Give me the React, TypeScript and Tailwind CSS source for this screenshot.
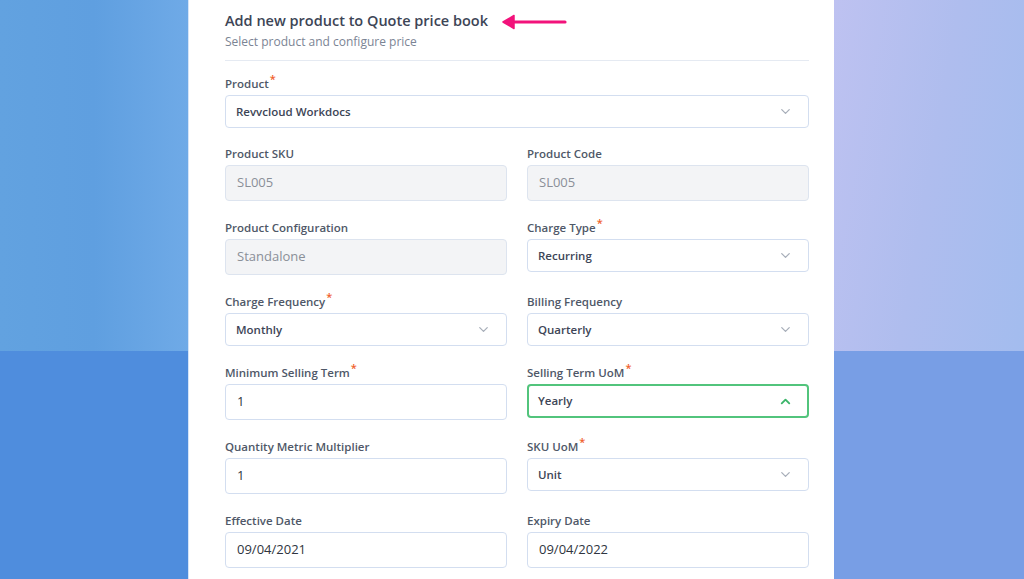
import { ChevronDown, ChevronUp } from "lucide-react";

type Field = {
    label: string;
    value: string;
    kind: "select" | "input" | "disabled";
    required?: boolean;
    focused?: boolean;
    span?: boolean;
};

const fields: Field[] = [
    { label: "Product", value: "Revvcloud Workdocs", kind: "select", required: true, span: true },
    { label: "Product SKU", value: "SL005", kind: "disabled" },
    { label: "Product Code", value: "SL005", kind: "disabled" },
    { label: "Product Configuration", value: "Standalone", kind: "disabled" },
    { label: "Charge Type", value: "Recurring", kind: "select", required: true },
    { label: "Charge Frequency", value: "Monthly", kind: "select", required: true },
    { label: "Billing Frequency", value: "Quarterly", kind: "select" },
    { label: "Minimum Selling Term", value: "1", kind: "input", required: true },
    { label: "Selling Term UoM", value: "Yearly", kind: "select", required: true, focused: true },
    { label: "Quantity Metric Multiplier", value: "1", kind: "input" },
    { label: "SKU UoM", value: "Unit", kind: "select", required: true },
    { label: "Effective Date", value: "09/04/2021", kind: "input" },
    { label: "Expiry Date", value: "09/04/2022", kind: "input" },
];

function FormField({ field }: { field: Field }) {
    return (
        <div className={field.span ? "col-span-2 flex flex-col -mb-px" : "flex flex-col"}>
            <label className="h-4 leading-4 text-[11.5px] font-semibold text-[#4f5868]">
                {field.label}
                {field.required && <sup className="ml-[1px] text-[11px] text-[#f0602c]">*</sup>}
            </label>
            {field.kind === "select" ? (
                <div
                    className={
                        field.focused
                            ? "mt-[3px] h-[34px] flex items-center justify-between rounded-[4px] border-2 border-[#52c47c] pl-[9px] pr-[14px]"
                            : "mt-[3px] h-[33px] flex items-center justify-between rounded-[4px] border border-[#d3def0] pl-[10px] pr-[15px]"
                    }
                >
                    <span className="text-[11.5px] font-semibold text-[#3d4556]">{field.value}</span>
                    {field.focused ? (
                        <ChevronUp className="w-[15px] h-[15px] text-[#3cb56a]" strokeWidth={3} />
                    ) : (
                        <ChevronDown className="w-[15px] h-[15px] text-[#a7aeb9]" strokeWidth={2} />
                    )}
                </div>
            ) : (
                <div
                    className={
                        field.kind === "disabled"
                            ? "mt-[3px] h-[36px] flex items-center rounded-[4px] border border-[#dde4ef] bg-[#f3f4f6] pl-[11px] text-[13px] text-[#8a8f98]"
                            : "mt-[3px] h-[36px] flex items-center rounded-[4px] border border-[#d3def0] bg-white pl-[11px] text-[13px] text-[#2f3540]"
                    }
                >
                    {field.value}
                </div>
            )}
        </div>
    );
}

export default function App() {
    return (
        <div className="flex h-[579px] w-[1024px] overflow-hidden" style={{ fontFamily: "'Open Sans', 'Liberation Sans', sans-serif" }}>
            <div className="w-[188px] flex flex-col">
                <div className="h-[351px] bg-[linear-gradient(90deg,#62a2e0_0%,#5f9fe0_50%,#6faae7_100%)]" />
                <div className="flex-1 bg-[#4f8ddd]" />
            </div>

            <main className="w-[646px] bg-white border-l border-[#d5e4f8] pl-[36px] pr-[25px] pt-[11px]">
                <div className="flex items-center">
                    <h1 className="leading-5 text-[14.5px] font-semibold text-[#3d4556]">
                        Add new product to Quote price book
                    </h1>
                    <svg className="ml-[14px] mt-[1px]" width="66" height="16" viewBox="0 0 66 16">
                        <path d="M7 8 H63" stroke="#f2137b" strokeWidth="3.2" strokeLinecap="round" />
                        <path d="M1 8 L12 1.5 L12 14.5 Z" fill="#f2137b" stroke="#f2137b" strokeWidth="1.5" strokeLinejoin="round" />
                    </svg>
                </div>
                <p className="mt-[2px] leading-[18px] text-[12px] text-[#7b8494]">Select product and configure price</p>
                <div className="mt-[9px] mb-[15px] border-b border-[#e5eaf2]" />

                <div className="grid grid-cols-2 gap-x-[20px] gap-y-[19px] items-start">
                    {fields.map((field) => (
                        <FormField key={field.label} field={field} />
                    ))}
                </div>
            </main>

            <div className="flex-1 flex flex-col">
                <div className="h-[351px] bg-[linear-gradient(100deg,#bec2f1_0%,#afbdee_50%,#a3bcee_100%)]" />
                <div className="flex-1 bg-[#789ee5]" />
            </div>
        </div>
    );
}
